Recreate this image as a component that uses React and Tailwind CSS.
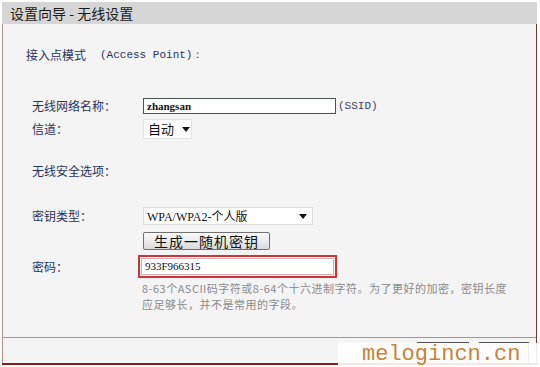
import React from 'react';

const cjk = { fontFamily: '"Noto Sans CJK SC", "Liberation Sans", sans-serif' };

function Label({ children }) {
    return (
        <div className="w-[140px] pl-[29px] text-[12px] leading-[16px] text-[#27335e] shrink-0 whitespace-nowrap" style={cjk}>
            {children}
        </div>
    );
}

export default function App() {
    return (
        <div className="w-[540px] h-[367px] bg-white relative overflow-hidden">
            {/* title bar */}
            <div className="ml-[2px] mt-[2px] w-[535px] h-[22px] bg-[#d6d6d6] pl-[8px] flex items-center text-[14px] text-[#1a1a1a]" style={cjk}>
                设置向导 - 无线设置
            </div>

            {/* body */}
            <div className="ml-[2px] w-[535px] h-[339px] bg-[#f4f4f4] border-l border-l-[#b89090] border-r border-r-[#6b3a3a] flex flex-col">
                <div className="mt-[23px] pl-[23px] h-[16px] flex items-center text-[12px] text-[#27335e]" style={cjk}>
                    接入点模式
                    <span className="ml-[14px] text-[11px] font-['Liberation_Mono',monospace]">(Access Point)：</span>
                </div>

                {/* SSID */}
                <div className="mt-[35px] h-[16px] flex items-center">
                    <Label>无线网络名称：</Label>
                    <div className="w-[193px] h-[16px] border border-[#4a5550] bg-white flex items-center pl-[3px] text-[11px] font-['Liberation_Serif',serif] font-bold text-[#111]">
                        zhangsan
                    </div>
                    <span className="ml-[2px] text-[11px] font-['Liberation_Mono',monospace] text-[#3b3b6b]">(SSID)</span>
                </div>

                {/* channel */}
                <div className="mt-[5px] h-[20px] flex items-center">
                    <Label>信道：</Label>
                    <div className="w-[49px] h-[20px] bg-white border border-[#e2e2e2] flex items-center pl-[4px] text-[13px] text-[#111]" style={cjk}>
                        自动
                        <span className="ml-[8px] w-0 h-0 border-l-[4px] border-r-[4px] border-t-[5px] border-l-transparent border-r-transparent border-t-[#111]"></span>
                    </div>
                </div>

                {/* security */}
                <div className="mt-[24px] h-[16px] flex items-center">
                    <Label>无线安全选项：</Label>
                </div>

                {/* key type */}
                <div className="mt-[28px] h-[18px] flex items-center">
                    <Label>密钥类型：</Label>
                    <div className="w-[170px] h-[18px] bg-white border border-[#dcdcdc] flex items-center justify-between pl-[3px] pr-[5px] text-[12px] text-[#111]" style={cjk}>
                        <span><span className="font-['Liberation_Serif',serif]">WPA/WPA2-</span>个人版</span>
                        <span className="w-0 h-0 border-l-[4px] border-r-[4px] border-t-[5px] border-l-transparent border-r-transparent border-t-[#111]"></span>
                    </div>
                </div>

                {/* generate button */}
                <div className="mt-[7px] h-[18px] flex items-center">
                    <div className="w-[140px] shrink-0"></div>
                    <div className="w-[127px] h-[18px] border border-[#707070] rounded-[2px] bg-gradient-to-b from-[#fafafa] to-[#dadada] flex items-center justify-center text-[14px] tracking-[1px] text-[#111]" style={cjk}>
                        生成一随机密钥
                    </div>
                </div>

                {/* password */}
                <div className="mt-[5px] h-[23px] flex items-center">
                    <Label>密码：</Label>
                    <div className="-ml-[5px] w-[199px] h-[23px] border-2 border-[#c6363a] p-[1px]">
                        <div className="w-full h-full bg-white border border-[#d8b0b0] flex items-center pl-[3px] text-[11px] font-['Liberation_Serif',serif] text-[#111]">
                            933F966315
                        </div>
                    </div>
                </div>

                {/* hint */}
                <div className="mt-[2px] pl-[139px] text-[11px] leading-[16px] tracking-[0.5px] text-[#8a8a8a] whitespace-nowrap" style={cjk}>
                    8-63个ASCII码字符或8-64个十六进制字符。为了更好的加密，密钥长度<br />
                    应足够长，并不是常用的字段。
                </div>

                {/* footer */}
                <div className="mt-auto h-[26px] border-t border-t-[#b88a8a] flex justify-end items-start gap-[10px] pr-[7px] pt-[4px]">
                    <div className="w-[52px] h-[22px] border border-[#555] bg-[#eee]"></div>
                    <div className="w-[50px] h-[22px] border border-[#555] bg-[#eee]"></div>
                </div>
            </div>
            <div className="ml-[2px] w-[536px] h-[2px] bg-[#8a1c1c]"></div>

            {/* watermark */}
            <div className="absolute right-0 bottom-0 w-[202px] h-[24px] bg-white/90 flex items-end pl-[24px]">
                <span className="text-[22px] leading-[24px] font-['Liberation_Mono',monospace] text-[#c98236]">melogincn.cn</span>
            </div>
        </div>
    );
}
